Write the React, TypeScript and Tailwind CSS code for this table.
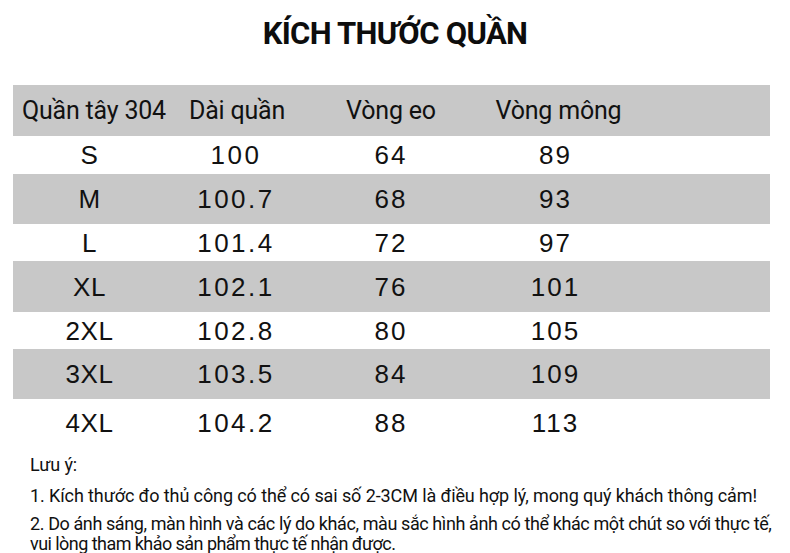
const ROWS = [
  { size: "S", len: "100", waist: "64", hip: "89", gray: false, h: "h-[38px]" },
  { size: "M", len: "100.7", waist: "68", hip: "93", gray: true, h: "h-[50px]" },
  { size: "L", len: "101.4", waist: "72", hip: "97", gray: false, h: "h-[37px]" },
  { size: "XL", len: "102.1", waist: "76", hip: "101", gray: true, h: "h-[51px]" },
  { size: "2XL", len: "102.8", waist: "80", hip: "105", gray: false, h: "h-[37px]" },
  { size: "3XL", len: "103.5", waist: "84", hip: "109", gray: true, h: "h-[50px]" },
  { size: "4XL", len: "104.2", waist: "88", hip: "113", gray: false, h: "h-[47px]" },
];

const COLS = "grid grid-cols-[155px_142px_162px_173px_1fr] items-center";

export default function App() {
  return (
    <div className="w-[790px] h-[553px] bg-white text-[#111] overflow-hidden font-['Roboto',sans-serif]">
      {/* Titel */}
      <div className="h-[85px] flex justify-center pt-[14px]">
        <h1 className="text-[31px] font-bold leading-[40px] tracking-[-0.7px] text-[#0d0d0d]">
          KÍCH THƯỚC QUẦN
        </h1>
      </div>

      {/* Tabelle */}
      <div className="mx-[13px] w-[757px]">
        <div className={`${COLS} h-[51px] bg-[#c8c8c8] text-[25px] leading-none tracking-[-0.2px]`}>
          <span className="pl-[9px] whitespace-nowrap">Quần tây 304</span>
          <span className="text-center pr-[4px] whitespace-nowrap">Dài quần</span>
          <span className="text-center whitespace-nowrap">Vòng eo</span>
          <span className="text-center whitespace-nowrap">Vòng mông</span>
          <span />
        </div>
        {ROWS.map((r) => (
          <div
            key={r.size}
            className={`${COLS} ${r.h} ${r.gray ? "bg-[#c8c8c8]" : "bg-white"} font-['Liberation_Sans',sans-serif] text-[26px] leading-none tracking-[2px]`}
          >
            <span className="text-center pr-[2px] tracking-[0.5px]">{r.size}</span>
            <span className="text-center pr-[6px] tracking-[2.5px]">{r.len}</span>
            <span className="text-center">{r.waist}</span>
            <span className="text-center pr-[6px]">{r.hip}</span>
            <span />
          </div>
        ))}
      </div>

      {/* Hinweise */}
      <div className="px-[30px] pt-[8px] text-[18px] tracking-[-0.1px] text-[#111]">
        <p className="leading-[22px]">Lưu ý:</p>
        <p className="leading-[22px] mt-[9px] whitespace-nowrap">
          1. Kích thước đo thủ công có thể có sai số 2-3CM là điều hợp lý, mong quý khách thông cảm!
        </p>
        <p className="leading-[20px] mt-[7px] whitespace-nowrap tracking-[-0.4px]">
          2. Do ánh sáng, màn hình và các lý do khác, màu sắc hình ảnh có thể khác một chút so với thực tế,
        </p>
        <p className="leading-[20px] whitespace-nowrap tracking-[-0.55px]">
          vui lòng tham khảo sản phẩm thực tế nhận được.
        </p>
      </div>
    </div>
  );
}
